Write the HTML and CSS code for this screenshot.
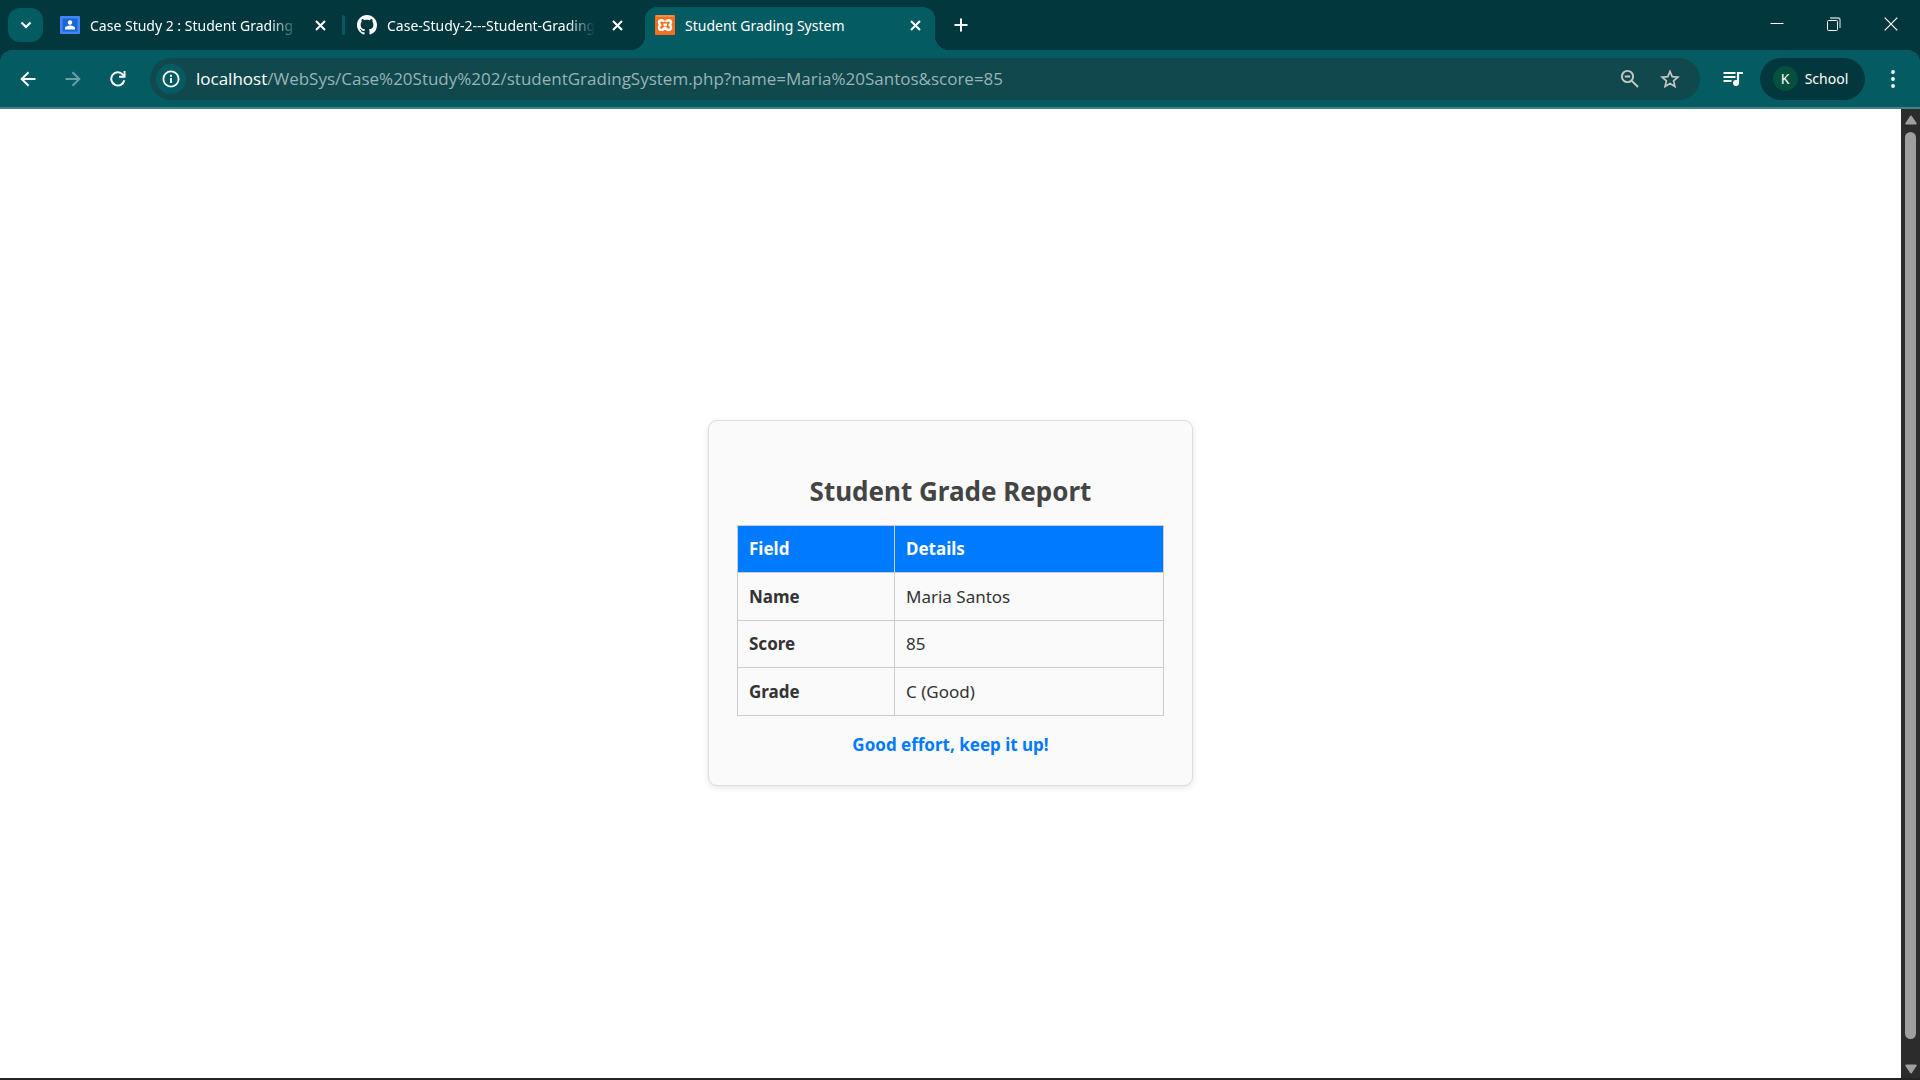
FILE: index.html
```html
<!DOCTYPE html>
<html lang="en">
<head>
<meta charset="utf-8">
<title>Student Grading System</title>
<link rel="stylesheet" href="styles.css">
</head>
<body>
<div class="browser">
  <header class="tabstrip">
    <button class="tab-search" aria-label="Search tabs"><svg width="12" height="8" viewBox="0 0 12 8"><path d="M1.5 1.5 6 6l4.500-4.500" fill="none" stroke="#fff" stroke-width="2.200"/></svg></button>
    <div class="tabs">
      <div class="tab">
        <svg class="favicon" viewBox="0 0 20 20"><rect y="1" width="20" height="18" rx="1" fill="#4285f4"/><rect x="2.500" y="3.500" width="15" height="13" fill="#1967d2"/><circle cx="10" cy="7.500" r="2.200" fill="#fff"/><path d="M5 14.500v-1.200c0-1.700 3-2.700 5-2.700s5 1 5 2.700v1.200z" fill="#fff"/></svg>
        <span class="tab-title fade">Case Study 2 : Student Grading</span>
        <button class="tab-close" aria-label="Close tab"><svg width="11" height="11" viewBox="0 0 11 11"><path d="M1 1l9 9M10 1l-9 9" stroke="#fff" stroke-width="2"/></svg></button>
      </div>
      <span class="separator"></span>
      <div class="tab">
        <svg class="favicon" viewBox="0 0 16 16"><path fill="#fff" d="M8 0C3.580 0 0 3.580 0 8c0 3.540 2.290 6.530 5.470 7.590.4.070.55-.17.55-.38 0-.19-.01-.82-.01-1.490-2.010.37-2.530-.49-2.690-.94-.09-.23-.48-.94-.82-1.130-.28-.15-.68-.52-.01-.53.63-.01 1.080.58 1.230.82.72 1.210 1.870.87 2.330.66.070-.52.28-.87.51-1.070-1.780-.2-3.640-.89-3.640-3.950 0-.87.31-1.590.82-2.150-.08-.2-.36-1.020.08-2.120 0 0 .67-.21 2.200.82.64-.18 1.320-.27 2-.27s1.360.09 2 .27c1.530-1.040 2.200-.82 2.200-.82.44 1.100.16 1.920.08 2.120.51.56.82 1.270.82 2.150 0 3.070-1.870 3.750-3.650 3.950.29.25.54.73.54 1.480 0 1.070-.01 1.930-.01 2.200 0 .21.15.46.55.38A8.010 8.010 0 0 0 16 8c0-4.420-3.580-8-8-8z"/></svg>
        <span class="tab-title fade">Case-Study-2---Student-Grading</span>
        <button class="tab-close" aria-label="Close tab"><svg width="11" height="11" viewBox="0 0 11 11"><path d="M1 1l9 9M10 1l-9 9" stroke="#fff" stroke-width="2"/></svg></button>
      </div>
      <span class="separator hidden"></span>
      <div class="tab active">
        <svg class="favicon" viewBox="0 0 20 20"><rect width="20" height="20" rx="1" fill="#f37021"/><path d="M1 1h18" stroke="#f9a36f" stroke-width="1"/><path d="M8.800 7C8.500 5.800 7.700 5.200 6.500 5.200c-1.500 0-2.500 1-2.500 2.400S5 9.700 5.400 10C4.700 10.400 4 11.100 4 12.400s1 2.500 2.500 2.500 2.400-1 3.500-2.300c1.100 1.300 2 2.300 3.500 2.300S16 13.700 16 12.400s-.7-2-1.400-2.400c.4-.3 1.400-1 1.400-2.400s-1-2.400-2.500-2.400S11.500 5.800 11.200 7M8.500 9.800h3.500" fill="none" stroke="#fff" stroke-width="2.400" stroke-linejoin="round"/></svg>
        <span class="tab-title">Student Grading System</span>
        <button class="tab-close" aria-label="Close tab"><svg width="11" height="11" viewBox="0 0 11 11"><path d="M1 1l9 9M10 1l-9 9" stroke="#fff" stroke-width="2"/></svg></button>
      </div>
    </div>
    <button class="new-tab" aria-label="New tab"><svg width="14" height="14" viewBox="0 0 14 14"><path d="M7 0.500v13M.5 7h13" stroke="#fff" stroke-width="2"/></svg></button>
    <div class="window-controls">
      <button aria-label="Minimize"><svg width="14" height="14" viewBox="0 0 14 14"><path d="M.5 6.500h13" stroke="#fff"/></svg></button>
      <button aria-label="Restore"><svg width="14" height="14" viewBox="0 0 14 14"><rect x=".5" y="3.500" width="10" height="10" rx="1" fill="none" stroke="#fff"/><path d="M3 1h8a2 2 0 0 1 2 2v8" fill="none" stroke="#b9cacb" stroke-width="1.300"/></svg></button>
      <button aria-label="Close window"><svg width="14" height="14" viewBox="0 0 14 14"><path d="M.7.7l12.600 12.600M13.300.7.7 13.300" stroke="#fff" stroke-width="1.200"/></svg></button>
    </div>
  </header>

  <nav class="toolbar" aria-label="Browser toolbar">
    <button class="nav-button" aria-label="Back"><svg width="16" height="16" viewBox="0 0 16 16"><path d="M15.500 8H2M8.500 1.200 1.700 8l6.800 6.800" fill="none" stroke="#fff" stroke-width="2"/></svg></button>
    <button class="nav-button" aria-label="Forward"><svg width="16" height="16" viewBox="0 0 16 16"><path d="M.5 8H14M7.500 1.200 14.300 8l-6.800 6.800" fill="none" stroke="#6d9fa2" stroke-width="2"/></svg></button>
    <button class="nav-button" aria-label="Reload"><svg width="16" height="16" viewBox="0 0 16 16"><path d="M14.300 9.300A6.600 6.600 0 1 1 12.900 3.600L14.500 5.500" fill="none" stroke="#fff" stroke-width="2"/><path d="M15.500 0v6.700H9V4.800h4.600V0z" fill="#fff"/></svg></button>
    <div class="omnibox">
      <button class="site-info" aria-label="View site information"><svg width="18" height="18" viewBox="0 0 18 18"><circle cx="9" cy="9" r="7.600" fill="none" stroke="#fff" stroke-width="1.800"/><path d="M9 8v5M9 4.800v1.900" stroke="#fff" stroke-width="1.900"/></svg></button>
      <a class="url" href="#report"><span class="host">localhost</span>/WebSys/Case%20Study%202/studentGradingSystem.php?name=Maria%20Santos&amp;score=85</a>
      <button class="omni-button" aria-label="Zoom"><svg width="20" height="20" viewBox="0 0 20 20"><circle cx="7.500" cy="7.500" r="5.600" fill="none" stroke="#c7c7c7" stroke-width="1.900"/><path d="M11.600 11.600l6.400 6.400M4.800 7.500h5.400" stroke="#c7c7c7" stroke-width="2"/></svg></button>
      <button class="omni-button" aria-label="Bookmark this tab"><svg width="20" height="20" viewBox="0 0 20 20"><path d="M10 2.500l2.200 5.200 5.700.5-4.300 3.700 1.300 5.500-4.900-2.900-4.900 2.900 1.300-5.500-4.300-3.700 5.700-.5z" fill="none" stroke="#c7c7c7" stroke-width="1.700"/></svg></button>
    </div>
    <button class="media" aria-label="Control your media"><svg width="20" height="16" viewBox="0 0 20 16"><path d="M.5 2h12M.5 6h12M.5 10h8" stroke="#fff" stroke-width="2"/><circle cx="13" cy="12" r="3" fill="#fff"/><path d="M15 12V2h5" fill="none" stroke="#fff" stroke-width="2.200"/></svg></button>
    <button class="profile"><span class="avatar">K</span>School</button>
    <button class="menu" aria-label="Menu"><svg width="4" height="18" viewBox="0 0 4 18"><circle cx="2" cy="2" r="1.900" fill="#fff"/><circle cx="2" cy="9" r="1.900" fill="#fff"/><circle cx="2" cy="16" r="1.900" fill="#fff"/></svg></button>
  </nav>

  <div class="viewport">
    <main class="page">
      <section class="card" id="report">
        <h2>Student Grade Report</h2>
        <table>
          <thead><tr><th scope="col">Field</th><th scope="col">Details</th></tr></thead>
          <tbody>
            <tr><th scope="row">Name</th><td>Maria Santos</td></tr>
            <tr><th scope="row">Score</th><td>85</td></tr>
            <tr><th scope="row">Grade</th><td>C (Good)</td></tr>
          </tbody>
        </table>
        <p class="remark">Good effort, keep it up!</p>
      </section>
    </main>
    <div class="scrollbar" aria-hidden="true">
      <svg width="12" height="10" viewBox="0 0 12 10"><path d="M6 1.500 10.700 8.500H1.300z" fill="#9f9f9f" stroke="#9f9f9f" stroke-width="2" stroke-linejoin="round"/></svg>
      <span class="thumb"></span>
      <svg width="12" height="10" viewBox="0 0 12 10"><path d="M6 8.500 10.700 1.500H1.300z" fill="#9f9f9f" stroke="#9f9f9f" stroke-width="2" stroke-linejoin="round"/></svg>
    </div>
  </div>
</div>
</body>
</html>
```
FILE: styles.css
```css
* {
  box-sizing: border-box;
}

body {
  margin: 0;
  font-family: "Noto Sans", "Open Sans", sans-serif;
  color: #333;
}

button {
  display: flex;
  align-items: center;
  justify-content: center;
  padding: 0;
  border: 0;
  background: none;
  color: #fff;
  font: inherit;
}

svg {
  display: block;
  flex: none;
}

.browser {
  display: flex;
  flex-direction: column;
  min-height: 100vh;
  background: #02383d;
  border-bottom: 2px solid #222;
}

/* Tab strip */
.tabstrip {
  display: flex;
  height: 50px;
  padding-left: 8px;
  font-size: 14px;
  color: #fff;
}

.tab-search {
  width: 35px;
  height: 34px;
  margin: 8px 7px 0 0;
  border-radius: 12px;
  background: #045c62;
}

.tabs {
  display: flex;
  align-items: flex-end;
}

.tab {
  position: relative;
  display: flex;
  align-items: center;
  width: 290px;
  height: 43px;
  padding: 0 10px 7px;
}

.tab.active {
  border-radius: 12px 12px 0 0;
  background: #045c62;
}

.tab.active::before,
.tab.active::after {
  content: "";
  position: absolute;
  bottom: 0;
  width: 14px;
  height: 14px;
}

.tab.active::before {
  right: 100%;
  background: radial-gradient(circle at 0 0, transparent 14px, #045c62 14px);
}

.tab.active::after {
  left: 100%;
  background: radial-gradient(circle at 100% 0, transparent 14px, #045c62 14px);
}

.favicon {
  width: 20px;
  height: 20px;
}

.tab-title {
  flex: 1;
  min-width: 0;
  margin: 0 8px 0 10px;
  padding-top: 1px;
  overflow: hidden;
  white-space: nowrap;
  line-height: 22px;
}

.tab-title.fade {
  mask-image: linear-gradient(to right, #000 85%, transparent 98%);
}

.tab-close {
  width: 20px;
  height: 20px;
}

.separator {
  align-self: center;
  width: 3px;
  height: 20px;
  margin: 0 2px;
  border-radius: 2px;
  background: #045c62;
}

.separator.hidden {
  width: 4px;
  visibility: hidden;
}

.new-tab {
  width: 34px;
  height: 34px;
  margin: 8px 0 0 9px;
}

.window-controls {
  display: flex;
  margin-left: auto;
  padding-right: 1px;
}

.window-controls button {
  width: 57px;
  height: 48px;
}

/* Toolbar */
.toolbar {
  display: flex;
  align-items: center;
  height: 59px;
  padding: 0 8px 0 6px;
  border-bottom: 2px solid #3e8287;
  border-radius: 12px 12px 0 0;
  background: #045c62;
}

.nav-button {
  width: 44px;
  height: 42px;
  margin-right: 1px;
}

.omnibox {
  display: flex;
  flex: 1;
  align-items: center;
  height: 42px;
  margin-left: 9px;
  padding: 0 10px 0 6px;
  border-radius: 21px;
  background: #10484e;
}

.site-info {
  width: 30px;
  height: 30px;
  border-radius: 50%;
  background: #045c62;
}

.url {
  flex: 1;
  margin-left: 10px;
  overflow: hidden;
  color: #98b4b7;
  font-family: "Open Sans", "Noto Sans", sans-serif;
  font-size: 17px;
  line-height: 28px;
  text-decoration: none;
  white-space: nowrap;
}

.host {
  color: #fff;
}

.omni-button {
  width: 40px;
  height: 40px;
}

.media {
  width: 60px;
  height: 42px;
  padding-left: 6px;
}

.profile {
  width: 105px;
  height: 42px;
  padding-right: 4px;
  gap: 7px;
  border-radius: 21px;
  background: #02383d;
  font-size: 14px;
}

.avatar {
  width: 25px;
  border-radius: 50%;
  background: #044f3e;
  line-height: 25px;
  text-align: center;
}

.menu {
  width: 38px;
  height: 42px;
  margin-left: 9px;
}

/* Page area */
.viewport {
  display: flex;
  flex: 1;
}

.page {
  display: flex;
  flex: 1;
  align-items: center;
  justify-content: center;
  padding-top: 19px;
  background: #fff;
}

.card {
  width: 485px;
  padding: 28px;
  border: 1px solid #ddd;
  border-radius: 9px;
  background: #fafafa;
  box-shadow: 0 2px 6px rgba(0, 0, 0, 0.1);
  font-size: 17px;
}

.card h2 {
  margin: 23px 0 15px;
  color: #444;
  font-size: 26px;
  line-height: 38px;
  text-align: center;
}

.card table {
  width: 100%;
  border-collapse: collapse;
  table-layout: fixed;
}

.card th,
.card td {
  height: 47px;
  padding: 0 11px;
  border: 1px solid #ccc;
  line-height: 24px;
  text-align: left;
}

.card tbody tr:nth-child(odd) > * {
  height: 48px;
}

.card th:first-child {
  width: 157px;
}

.card thead th {
  background: #007bff;
  color: #fff;
}

.remark {
  margin: 17px 0 0;
  color: #007bff;
  font-weight: bold;
  line-height: 24px;
  text-align: center;
}

.scrollbar {
  display: flex;
  flex-direction: column;
  align-items: center;
  width: 19px;
  padding: 6px 0 4px;
  background: #2c2c2c;
}

.thumb {
  flex: 1;
  width: 11px;
  margin: 7px 0 25px;
  border-radius: 6px;
  background: #9f9f9f;
}
```
